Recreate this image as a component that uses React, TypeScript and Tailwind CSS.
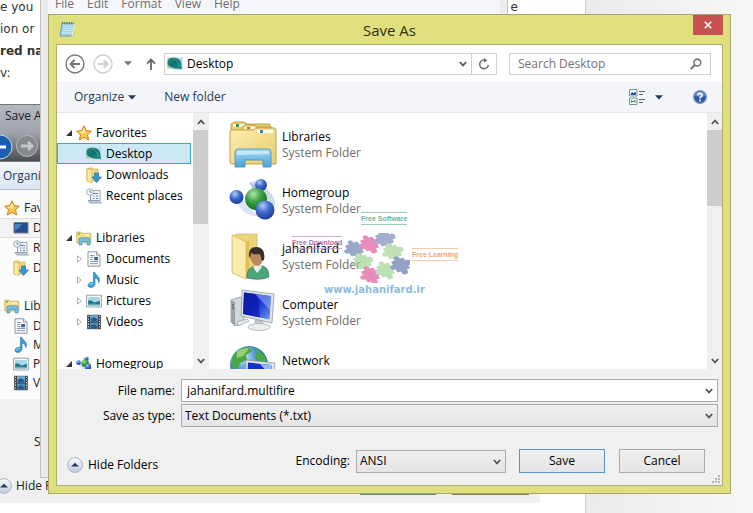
import type { ReactNode } from 'react';
import clsx from 'clsx';

type IconProps = { className?: string };

const StarIcon = ({ className }: IconProps) => (
  <svg viewBox="0 0 16 16" className={className}>
    <path
      d="M8 .8 10.2 5.6 15.4 6.2 11.5 9.8 12.6 15 8 12.4 3.4 15 4.5 9.8.6 6.2 5.8 5.6Z"
      fill="#fbc64b"
      stroke="#cf7d1e"
      strokeLinejoin="round"
    />
    <path d="M8 2.8 9.4 6.4 8 9 3 7 6.3 6.4Z" fill="#fdeca0" />
  </svg>
);

const DesktopIcon = ({ className }: IconProps) => (
  <svg viewBox="0 0 16 16" className={className}>
    <defs>
      <linearGradient id="desk" x1="0" y1="0" x2="1" y2="1">
        <stop offset="0" stopColor="#2f9a6c" />
        <stop offset=".45" stopColor="#0f6f78" />
        <stop offset="1" stopColor="#1d9080" />
      </linearGradient>
    </defs>
    <path d="M.5 1.5H15.5V14L.5 12.5Z" fill="#b4d6ea" />
    <path d="M.5 4Q2 1.8 6 1.6 12 1.8 14 6.5L15 13 8 12.6Q3 11.5.5 9Z" fill="url(#desk)" />
    <path d="M.5 8.5Q3 11.5 8 12.8L.5 12Z" fill="#a6cb7b" />
    <path d="M6 2.5Q11 4 12.5 11" stroke="#3fae93" strokeWidth=".8" fill="none" />
  </svg>
);

const DownloadsIcon = ({ className }: IconProps) => (
  <svg viewBox="0 0 16 16" className={className}>
    <path d="M1 1.5 6 .8V2H12V14H1Z" fill="#f3d878" stroke="#d2ad45" strokeWidth=".7" />
    <path d="M1 1.5 6 3V15.5L1 14Z" fill="#faeaa5" stroke="#d2ad45" strokeWidth=".7" />
    <path d="M8.5 6H12.5V10H15.5L10.5 15.5 6 10H8.5Z" fill="#3795dc" stroke="#2473ae" strokeWidth=".7" />
  </svg>
);

const RecentIcon = ({ className }: IconProps) => (
  <svg viewBox="0 0 16 16" className={className}>
    <path d="M4.5 2.5H14V13H4.5Z" fill="#edf3f9" stroke="#7f92a5" strokeWidth=".8" />
    <path d="M2 12.5H12.5L15.5 15H4Z" fill="#c5d0db" stroke="#75889b" strokeWidth=".7" />
    <path d="M7 5.5H12M7 8H8.5M10 8H12M7 10.5H8.5M10 10.5H12" stroke="#6a87a5" />
    <circle cx="4" cy="4" r="3.3" fill="#f4f7fa" stroke="#8799aa" strokeWidth=".8" />
    <path d="M4 2V4.2H5.8" stroke="#586b7e" strokeWidth=".8" fill="none" />
  </svg>
);

const LibrariesSmallIcon = ({ className }: IconProps) => (
  <svg viewBox="0 0 16 16" className={className}>
    <path d="M.8 2H5L6 3.3H14.8V13H.8Z" fill="#f4df8b" stroke="#bfa24a" strokeWidth=".7" />
    <path d="M2 3.8H4" stroke="#48a04a" strokeWidth="1.2" />
    <path d="M8 4.8H13" stroke="#fff8d4" strokeWidth="1.2" />
    <path d="M3 15V9.2Q3 7.8 4.5 7.8H12.5Q14 7.8 14 9.2V15H11.2V11.5H5.8V15Z" fill="#72c0e8" stroke="#4092bf" strokeWidth=".7" />
  </svg>
);

const DocumentIcon = ({ className }: IconProps) => (
  <svg viewBox="0 0 16 16" className={className}>
    <path d="M2 .8H10.5L14 4.2V15.2H2Z" fill="#fbfcfd" stroke="#7f8c99" strokeWidth=".9" />
    <path d="M10.5.8V4.2H14" fill="#dde5ed" stroke="#7f8c99" strokeWidth=".8" />
    <path d="M4 4.5H8.5M4 6.5H7M4 8.5H7M4 10.5H12M4 12.7H12" stroke="#7590ae" strokeWidth=".9" />
    <path d="M8.2 6H12V9.3H8.2Z" fill="#315f98" />
  </svg>
);

const MusicIcon = ({ className }: IconProps) => (
  <svg viewBox="0 0 16 16" className={className}>
    <path
      d="M7.5.5H9C9.2 3.4 13.8 4 13.6 8.2 13.5 9.2 13 10 12.4 10.6 12.9 7.6 10.6 6.2 9 6V12.2C8.8 14.4 6.5 15.6 4.3 15.4 2.2 15.1 1.4 13.5 2.4 12 3.4 10.5 5.8 9.8 7.5 10.5Z"
      fill="#37a3dd"
      stroke="#2271a5"
      strokeWidth=".6"
    />
    <path d="M3.3 13Q4.5 11.3 6.8 11.5" stroke="#a6dcf7" fill="none" />
  </svg>
);

const PictureIcon = ({ className }: IconProps) => (
  <svg viewBox="0 0 16 16" className={className}>
    <path d="M.6 2.2H15.4V14H.6Z" fill="#f9fbfc" stroke="#7c8b98" strokeWidth=".8" />
    <path d="M2.2 4H13.8V12.3H2.2Z" fill="#a3d8ec" />
    <path d="M2.2 7.6Q5 7 7 8.8T13.8 7.6V12.3H2.2Z" fill="#216f7e" />
    <path d="M2.2 10.8Q8 9.8 13.8 11.2V12.3H2.2Z" fill="#5dafb9" />
  </svg>
);

const VideoIcon = ({ className }: IconProps) => (
  <svg viewBox="0 0 16 16" className={className}>
    <path d="M1.2.8H14.8V15.2H1.2Z" fill="#2c3742" />
    <path d="M4 1.2H12V7.5H4Z" fill="#70aed4" />
    <path d="M4 8.5H12V14.8H4Z" fill="#4e91bd" />
    <path d="M4 5 8 3 12 5.5 10 7.5H6ZM4 12 8 10 12 13 10 14.8H6Z" fill="#295b86" />
    <path d="M2.6 1.8V15M13.4 1.8V15" stroke="#dde8f0" strokeWidth="1.1" strokeDasharray="1.3 1.3" />
  </svg>
);

const HomegroupIcon = ({ className }: IconProps) => (
  <svg viewBox="0 0 48 48" className={className}>
    <defs>
      <radialGradient id="blueBall" cx=".38" cy=".28" r=".75">
        <stop offset="0" stopColor="#b4cdf6" />
        <stop offset=".45" stopColor="#426ed0" />
        <stop offset="1" stopColor="#173a9c" />
      </radialGradient>
      <radialGradient id="greenBall" cx=".38" cy=".28" r=".75">
        <stop offset="0" stopColor="#b2e3a6" />
        <stop offset=".45" stopColor="#3ea548" />
        <stop offset="1" stopColor="#126b25" />
      </radialGradient>
    </defs>
    <path d="M20 6Q28 2 33 7 43 15 46 24 47 31 39 39 43 23 31 14Z" fill="#cfdced" />
    <path d="M9 20Q7 34 24 39L38 40Q20 36 15 24Z" fill="#d9e3f1" />
    <path d="M20 5Q25 11 22 17L33 12Z" fill="#a9c1e4" />
    <circle cx="32" cy="8" r="6" fill="url(#blueBall)" />
    <circle cx="7.5" cy="20" r="7" fill="url(#blueBall)" />
    <circle cx="27" cy="22" r="11" fill="url(#greenBall)" />
    <circle cx="36" cy="33" r="9.5" fill="url(#blueBall)" />
  </svg>
);

const LibrariesLargeIcon = ({ className }: IconProps) => (
  <svg viewBox="0 0 48 48" className={className}>
    <defs>
      <linearGradient id="folder" x1="0" y1="0" x2="1" y2="1">
        <stop offset="0" stopColor="#fbeeb0" />
        <stop offset="1" stopColor="#e9cd6c" />
      </linearGradient>
      <linearGradient id="stand" x1="0" y1="0" x2="0" y2="1">
        <stop offset="0" stopColor="#a4dcf5" />
        <stop offset="1" stopColor="#4ba4d6" />
      </linearGradient>
    </defs>
    <path d="M2 12V3L5 1H15L18 3H41V14Z" fill="#e8cf74" stroke="#af9037" strokeWidth=".8" />
    <path d="M4 3H16V6H4Z" fill="#fdf9e2" />
    <path d="M7 3H10V6H7Z" fill="#459847" />
    <path d="M13 14V6L16 4H25L28 6H43V16Z" fill="#efd986" stroke="#af9037" strokeWidth=".8" />
    <path d="M16 6H26V8H16Z" fill="#fdf9e2" />
    <path d="M18 6H21V8H18Z" fill="#bf673c" />
    <path d="M1 11Q1 9 3 9H25L27 7H45Q47 7 47 9V43H3Q1 43 1 41Z" fill="url(#folder)" stroke="#bd9a3c" strokeWidth=".9" />
    <path d="M28 9H44V12H28Z" fill="#fffdf0" />
    <path d="M31 9H34V12H31Z" fill="#4279ae" />
    <path d="M6 46V31Q6 28 9 28H39Q42 28 42 31V46H34V39H16V46Z" fill="url(#stand)" stroke="#5093bd" strokeWidth=".9" />
    <path d="M8 34V31Q8 30 10 30H38Q40 30 40 31V33Z" fill="#d4f0fb" opacity=".75" />
  </svg>
);

const UserFolderIcon = ({ className }: IconProps) => (
  <svg viewBox="0 0 48 48" className={className}>
    <path d="M5 2 9 1H28V42H8Z" fill="#ecd27b" stroke="#d4b65b" strokeWidth=".7" />
    <path d="M3 2 17 9V46L3 40Z" fill="#fbecad" stroke="#d2b557" strokeWidth=".8" />
    <path d="M17 9 20 7V43L17 46Z" fill="#dfbd57" />
    <path d="M18 43Q18 34 27 33L34 33Q40 35 40 44 31 48 18 45Z" fill="#4fa57a" stroke="#35775a" strokeWidth=".7" />
    <path d="M24 34 28 40 33 34 30 30Z" fill="#e5f0e4" />
    <path d="M21 24Q20 17 28 17T34 25Q33 33 28 33 22 31 21 24Z" fill="#bd8761" />
    <path d="M20 23Q19 14 28 14 37 15 35 27L33 28 31 21Q25 22 22 20L21 25Z" fill="#3c2d25" />
  </svg>
);

const ComputerIcon = ({ className }: IconProps) => (
  <svg viewBox="0 0 48 48" className={className}>
    <defs>
      <linearGradient id="screen" x1="0" y1="0" x2="1" y2="1">
        <stop offset="0" stopColor="#0b1d9d" />
        <stop offset=".5" stopColor="#1734d3" />
        <stop offset="1" stopColor="#6f9cf2" />
      </linearGradient>
    </defs>
    <path d="M2 11 11 8 15 10V34L6 37 2 33Z" fill="#d2d7dc" stroke="#8a9299" strokeWidth=".7" />
    <path d="M2 11 6 13V37L2 33Z" fill="#9ba3aa" />
    <path d="M3 16H5M3 19H5" stroke="#465057" />
    <path d="M8 33 18 30 20 32 9 37Z" fill="#e8ebed" stroke="#9ba3a9" strokeWidth=".7" />
    <path d="M25 31H34L35 38H27Z" fill="#bfc6cb" />
    <ellipse cx="30" cy="38" rx="11" ry="3.5" fill="#eceff1" stroke="#a6adb3" strokeWidth=".8" />
    <path d="M13 1 45 5 43 34 12 27Z" fill="#e0e4e8" stroke="#929ba3" strokeWidth=".8" />
    <path d="M15 3.5 42 7 40.5 30.5 14 25Z" fill="url(#screen)" />
    <path d="M15 3.5 29 5.3 31 28.5 14 25Z" fill="#0d1aab" opacity=".7" />
    <path d="M26 5 42 7 41 21Z" fill="#a9c5fa" opacity=".5" />
  </svg>
);

const NetworkIcon = ({ className }: IconProps) => (
  <svg viewBox="0 0 48 48" className={className}>
    <defs>
      <radialGradient id="globe" cx=".35" cy=".3" r=".75">
        <stop offset="0" stopColor="#c5e9fb" />
        <stop offset=".5" stopColor="#418fce" />
        <stop offset="1" stopColor="#154f94" />
      </radialGradient>
    </defs>
    <circle cx="20" cy="20" r="19" fill="url(#globe)" />
    <path d="M5 9Q11 2 19 2L23 6 17 10 18 15 11 18 9 24 2 21Q2 13 5 9ZM25 3Q35 7 38 16L31 18 26 13 28 8Z" fill="#4ca747" />
    <path d="M8 6Q16 2 20 4L14 11 8 13Z" fill="#b6df8b" opacity=".7" />
    <path d="M17 15 46 18 44 44 16 39Z" fill="#e0e5ea" stroke="#8c99a5" strokeWidth=".8" />
    <path d="M19 17.5 43 20 41.5 41 18 37Z" fill="#1631ca" />
    <path d="M31 19 43 20 42 31Z" fill="#9cbaf5" />
  </svg>
);

const NotepadIcon = ({ className }: IconProps) => (
  <svg viewBox="0 0 16 16" className={className}>
    <path d="M3 2.2H15L13.6 15H1Z" fill="#9ed0e4" stroke="#5a93ad" strokeWidth=".8" />
    <path d="M3.8 5H13.6M3.5 7.3H13.3M3.2 9.6H13M3 12H12.7" stroke="#d5eef7" strokeWidth=".9" />
    <path d="M13 15 15.4 3" stroke="#fbfdfd" />
    <path d="M3.5 1V3.2M5.8 1V3.2M8.1 1V3.2M10.4 1V3.2M12.7 1V3.2" stroke="#5b6870" strokeWidth=".9" />
  </svg>
);

const Chevron = ({ className, up }: IconProps & { up?: boolean }) => (
  <svg viewBox="0 0 8 6" className={clsx('h-[6px] w-2 shrink-0', className)}>
    <path d={up ? 'M.8 5 4 1.6 7.2 5' : 'M.8 1 4 4.4 7.2 1'} fill="none" stroke="#555" strokeWidth="1.8" />
  </svg>
);

const Caret = ({ className }: IconProps) => (
  <svg viewBox="0 0 8 5" className={clsx('h-[5px] w-2 shrink-0', className)}>
    <path d="M0 .3H8L4 4.6Z" fill="currentColor" />
  </svg>
);

const CollapseIcon = () => (
  <svg viewBox="0 0 16 16" className="size-4 shrink-0">
    <defs>
      <linearGradient id="collapse" x1="0" y1="0" x2="0" y2="1">
        <stop offset="0" stopColor="#fbfcfd" />
        <stop offset="1" stopColor="#bccbdc" />
      </linearGradient>
    </defs>
    <circle cx="8" cy="8" r="7.4" fill="url(#collapse)" stroke="#a9b4c0" />
    <path d="M4 9.6 8 5.8 12 9.6Z" fill="#273a5e" />
  </svg>
);

const ArrowCircle = ({ right, color }: { right?: boolean; color: string }) => (
  <svg viewBox="0 0 20 20" className="size-5">
    <circle cx="10" cy="10" r="9" fill="none" stroke={color} strokeWidth="1.4" />
    <path
      d={right ? 'M5 10H14M10.5 6 14.5 10 10.5 14' : 'M15 10H6M9.5 6 5.5 10 9.5 14'}
      fill="none"
      stroke={color}
      strokeWidth="2"
    />
  </svg>
);

const small = 'size-4 shrink-0';

type TreeNode = { label: string; icon: ReactNode };
type TreeGroup = TreeNode & { items: TreeNode[]; expandable?: boolean };

const tree: TreeGroup[] = [
  {
    label: 'Favorites',
    icon: <StarIcon className={small} />,
    items: [
      { label: 'Desktop', icon: <DesktopIcon className={small} /> },
      { label: 'Downloads', icon: <DownloadsIcon className={small} /> },
      { label: 'Recent places', icon: <RecentIcon className={small} /> },
    ],
  },
  {
    label: 'Libraries',
    icon: <LibrariesSmallIcon className={small} />,
    expandable: true,
    items: [
      { label: 'Documents', icon: <DocumentIcon className={small} /> },
      { label: 'Music', icon: <MusicIcon className={small} /> },
      { label: 'Pictures', icon: <PictureIcon className={small} /> },
      { label: 'Videos', icon: <VideoIcon className={small} /> },
    ],
  },
  { label: 'Homegroup', icon: <HomegroupIcon className={small} />, items: [] },
];

const large = 'size-12 shrink-0';

const files = [
  { name: 'Libraries', icon: <LibrariesLargeIcon className={large} /> },
  { name: 'Homegroup', icon: <HomegroupIcon className={large} /> },
  { name: 'jahanifard', icon: <UserFolderIcon className={large} /> },
  { name: 'Computer', icon: <ComputerIcon className={large} /> },
  { name: 'Network', icon: <NetworkIcon className={large} /> },
];

const Scrollbar = ({ thumb }: { thumb: string }) => (
  <div className="flex w-[15px] shrink-0 flex-col items-center bg-[#f0f0f0]">
    <div className="flex h-[17px] items-center">
      <Chevron up />
    </div>
    <div className={clsx('w-full bg-[#cdcdcd]', thumb)} />
    <div className="mt-auto flex h-[17px] items-center">
      <Chevron />
    </div>
  </div>
);

const Sidebar = () => (
  <nav className="flex min-w-0 flex-1 flex-col gap-[21px] overflow-hidden pt-[9px]">
    {tree.map(group => (
      <div key={group.label}>
        <button className="flex h-[21px] items-center gap-1 pl-[9px]">
          <svg viewBox="0 0 6 6" className="size-[6px]">
            <path d="M6 0V6H0Z" fill="#333" />
          </svg>
          {group.icon}
          {group.label}
        </button>
        {group.items.map(item => (
          <button
            key={item.label}
            className={clsx(
              'flex h-[21px] w-[134px] items-center gap-1 border pl-[19px] whitespace-nowrap',
              item.label === 'Desktop' ? 'border-[#4aa0bd] bg-[#cbe8f6]' : 'border-transparent',
            )}
          >
            <svg viewBox="0 0 5 8" className="h-2 w-[5px]">
              {group.expandable && <path d="M.5.8 4.3 4 .5 7.2Z" fill="#fff" stroke="#999" strokeWidth=".8" />}
            </svg>
            {item.icon}
            {item.label}
          </button>
        ))}
      </div>
    ))}
  </nav>
);

// column, row, colour of each jigsaw piece; the middle one is missing
const puzzle: [number, number, string][] = [
  [0, 0, '#6e83b3'],
  [1, 0, '#e05ba0'],
  [2, 0, '#7a8cba'],
  [0, 1, '#a5d39a'],
  [2, 1, '#a5d39a'],
  [0, 2, '#e05ba0'],
  [1, 2, '#a5d39a'],
  [2, 2, '#657cad'],
];

const tag = "absolute border-y font-['Liberation_Sans'] text-[7px] leading-[11px] font-bold whitespace-nowrap";

const Watermark = () => (
  <div className="pointer-events-none absolute top-[99px] left-[83px] h-[92px] w-[170px] opacity-70">
    <svg viewBox="0 0 66 50" className="absolute top-[21px] left-[52px] h-[50px] w-[66px]">
      <g transform="matrix(15 -5 8 13 -1 12)">
        {puzzle.map(([col, row, color]) => (
          <g key={`${col}-${row}`} fill={color}>
            <rect x={col + 0.08} y={row + 0.08} width=".84" height=".84" rx=".08" />
            <circle cx={col + 1} cy={row + 0.5} r=".2" />
            <circle cx={col + 0.5} cy={row + 1} r=".2" />
            <circle cx={col + 0.5} cy={row} r=".16" />
            <circle cx={col} cy={row + 0.5} r=".16" />
          </g>
        ))}
      </g>
    </svg>
    <span className={clsx(tag, 'top-0 left-[69px] border-[#75b793] text-[#358f62]')}>Free Software</span>
    <span className={clsx(tag, 'top-6 left-0 border-[#bb8abb] text-[#84368b]')}>Free Download</span>
    <span className={clsx(tag, 'top-9 left-[120px] border-[#f2b491] text-[#e97b43]')}>Free Learning</span>
    <span className="absolute top-[70px] left-[32px] font-['DejaVu_Sans'] text-[10px] leading-4 font-bold whitespace-nowrap text-[#5b9fd8]">
      www.jahanifard.ir
    </span>
  </div>
);

const SaveDialog = () => (
  <section className="relative mt-[14px] mr-[22px] ml-12 border border-[#a8a76d] bg-[#e0df7e] px-[7px] pb-[7px] text-xs text-black">
    <header className="relative flex h-[29px] items-center justify-center">
      <NotepadIcon className="absolute top-[6px] left-[3px] size-4" />
      <h1 className="text-[15px] leading-5 text-[#30300f]">Save As</h1>
      <button aria-label="Close" className="absolute top-0 right-0 flex h-5 w-[30px] items-center justify-center bg-[#c75050]">
        <svg viewBox="0 0 8 8" className="size-2">
          <path d="M.8.8 7.2 7.2M7.2.8.8 7.2" stroke="#fff" strokeWidth="1.6" />
        </svg>
      </button>
    </header>

    <div className="border border-[#b0ae70] bg-[#f0f0f0]">
      {/* Address bar */}
      <div className="flex h-[37px] items-center bg-white pr-[11px] pl-2">
        <button aria-label="Back"><ArrowCircle color="#7a7a7a" /></button>
        <button aria-label="Forward" className="ml-2"><ArrowCircle right color="#cfcfcf" /></button>
        <button aria-label="Recent locations" className="ml-[11px] text-[#777]"><Caret /></button>
        <button aria-label="Up" className="ml-[14px]">
          <svg viewBox="0 0 10 12" className="h-3 w-[10px]">
            <path d="M5 12V2M1 5.6 5 1.6 9 5.6" fill="none" stroke="#666" strokeWidth="1.8" />
          </svg>
        </button>
        <div className="ml-2 flex h-[22px] flex-1 items-center border border-[#d0d0d0]">
          <DesktopIcon className="ml-[2px] size-4" />
          <input aria-label="Address" defaultValue="Desktop" className="ml-1 min-w-0 flex-1 outline-none" />
          <button aria-label="Previous locations" className="mr-1"><Chevron /></button>
          <button aria-label="Refresh" className="flex h-full w-[25px] items-center justify-center border-l border-[#d0d0d0]">
            <svg viewBox="0 0 12 12" className="size-3">
              <path d="M7 2H6A4.3 4.3 0 1 0 10.3 6.8" fill="none" stroke="#707070" strokeWidth="1.6" />
              <path d="M6 0 9.5 2.2 6 4.8Z" fill="#707070" />
            </svg>
          </button>
        </div>
        <div className="ml-3 flex h-[22px] w-[202px] items-center border border-[#d0d0d0] pr-2 pl-2">
          <input aria-label="Search" placeholder="Search Desktop" className="min-w-0 flex-1 outline-none placeholder:text-[#747474]" />
          <svg viewBox="0 0 12 12" className="size-3">
            <circle cx="7.3" cy="4.5" r="3.4" fill="none" stroke="#777" strokeWidth="1.6" />
            <path d="M4.8 7 .8 11" stroke="#777" strokeWidth="2.2" />
          </svg>
        </div>
      </div>

      {/* Command bar */}
      <div className="flex h-[31px] items-center border-b border-[#e4e6ea] bg-[#f4f5f8] pr-[15px] pl-[17px] text-[#1e395b]">
        <button className="flex items-center gap-1">Organize <Caret /></button>
        <button className="ml-7">New folder</button>
        <button aria-label="Change view" className="ml-auto flex items-center gap-[10px]">
          <svg viewBox="0 0 16 16" className="size-4">
            <path d="M.5.5H8V7H.5ZM.5 9H8V15.5H.5Z" fill="#f7fbfd" stroke="#6a9a9e" />
            <path d="M2 5.5 3 3.5 4.5 4.5 6.5 3.5V5.5Z" fill="#24539b" stroke="#24539b" />
            <path d="M2.5 13.5V11.5L4 13 6 11.5V13.5" stroke="#348044" fill="none" />
            <path d="M10 2.5H16M10 5.5H14M10 10.5H16M10 13.5H14" stroke="#52677b" />
          </svg>
          <Caret />
        </button>
        <button aria-label="Help" className="ml-[30px]">
          <svg viewBox="0 0 14 14" className="size-[14px]">
            <circle cx="7" cy="7" r="6.3" fill="#2d58b5" stroke="#7e94b9" strokeWidth="1.2" />
            <path d="M2 5.5A5.2 5.2 0 0 1 12 5.5Q7 8 2 5.5Z" fill="#86a6e2" opacity=".7" />
            <path d="M5 5.3Q5 3.4 7 3.4T9 5.2Q9 6.3 7.8 6.9 7 7.3 7 8.4" fill="none" stroke="#fff" strokeWidth="1.6" />
            <circle cx="7" cy="10.4" r="1" fill="#fff" />
          </svg>
        </button>
      </div>

      <div className="flex h-64 overflow-hidden bg-white">
        <div className="flex w-[152px] shrink-0 border-r border-[#f0f0f0]">
          <Sidebar />
          <Scrollbar thumb="h-[94px]" />
        </div>
        <div className="relative min-w-0 flex-1 pt-1 pl-5">
          {files.map(file => (
            <button key={file.name} className="flex h-14 items-center gap-[5px] text-left leading-4">
              {file.icon}
              <span>
                {file.name}
                <span className="block text-[#6d6d6d]">System Folder</span>
              </span>
            </button>
          ))}
          <Watermark />
        </div>
        <Scrollbar thumb="h-[76px]" />
      </div>

      <form className="pt-[10px] pb-3" onSubmit={e => e.preventDefault()}>
        <div className="grid grid-cols-[118px_1fr] items-center gap-x-[6px] gap-y-[2px] pr-1">
          <label htmlFor="fileName" className="text-right">File name:</label>
          <div className="flex h-[23px] items-center border border-[#ababab] bg-white pr-1 pl-[5px]">
            <input id="fileName" defaultValue="jahanifard.multifire" className="min-w-0 flex-1 outline-none" />
            <button type="button" aria-label="File name history"><Chevron /></button>
          </div>
          <label htmlFor="fileType" className="text-right">Save as type:</label>
          <div className="relative">
            <select id="fileType" className="block h-[23px] w-full appearance-none border border-[#ababab] bg-linear-to-b from-[#f0f0f0] to-[#e5e5e5] pl-[3px]">
              <option>Text Documents (*.txt)</option>
            </select>
            <Chevron className="pointer-events-none absolute top-[9px] right-[5px]" />
          </div>
        </div>

        <div className="mt-[22px] flex h-6 items-center pr-[17px] pl-[10px]">
          <button type="button" className="flex items-center gap-[5px] self-end">
            <CollapseIcon />
            Hide Folders
          </button>
          <label htmlFor="encoding" className="ml-auto">Encoding:</label>
          <div className="relative ml-[6px]">
            <select id="encoding" className="block h-[23px] w-[150px] appearance-none border border-[#ababab] bg-linear-to-b from-[#f0f0f0] to-[#e5e5e5] pl-[3px]">
              <option>ANSI</option>
            </select>
            <Chevron className="pointer-events-none absolute top-[9px] right-[5px]" />
          </div>
          <button type="submit" className="ml-[13px] h-6 w-[86px] border border-[#5a93c8] bg-linear-to-b from-[#f0f0f0] to-[#e5e5e5]">
            Save
          </button>
          <button type="button" className="ml-[14px] h-6 w-[86px] border border-[#acacac] bg-linear-to-b from-[#f0f0f0] to-[#e5e5e5]">
            Cancel
          </button>
        </div>
      </form>
      <svg viewBox="0 0 8 8" className="absolute right-[10px] bottom-[10px] size-2">
        <path d="M6 0H8V2H6ZM3 3H5V5H3ZM6 3H8V5H6ZM0 6H2V8H0ZM3 6H5V8H3ZM6 6H8V8H6Z" fill="#b8b8b8" />
      </svg>
    </div>
  </section>
);

// Older dialog that sits in the article behind the windows
const ArticleDialog = () => (
  <div className="absolute top-[104px] right-[213px] left-0 h-[399px] overflow-hidden bg-[#f0f0f0] text-xs text-[#222]">
    <div className="flex h-[58px] flex-col justify-between border-t border-b border-[#777] bg-linear-to-b from-[#b4bac2] via-[#a0a4aa] to-[#4b4f54]">
      <span className="pt-[3px] pl-[5px] leading-4">Save As</span>
      <svg viewBox="0 0 40 28" className="h-7 w-10">
        <circle cx="0" cy="14" r="12" fill="#1c5fae" stroke="#cfd8e2" />
        <path d="M6 14H-4M-1 9-6 14-1 19" stroke="#fff" strokeWidth="3" fill="none" />
        <circle cx="27" cy="13" r="10.5" fill="#85898d" stroke="#b5b9bd" />
        <path d="M21 13H32M28 9 32 13 28 17" stroke="#c4c6c8" strokeWidth="3" fill="none" />
      </svg>
    </div>
    <div className="h-7 border-b border-[#b9c4d3] bg-linear-to-b from-[#f3f7fc] to-[#dbe6f3] pl-[3px] leading-7 text-[#1e395b]">
      Organize
    </div>
    <div className="h-[209px] bg-[#fcfcfc] pt-2 whitespace-nowrap">
      <div className="flex h-5 items-center gap-1 pl-1"><StarIcon className={small} />Favorites</div>
      <div className="flex h-5 items-center gap-1 border-y border-[#ddd] bg-[#f2f2f2] pl-[13px]">
        <svg viewBox="0 0 16 16" className={small}>
          <path d="M1 2.5H15V13H1Z" fill="#234f91" stroke="#6d8099" />
          <path d="M2 4H9L5 9 2 10Z" fill="#4381c6" />
        </svg>
        Desktop
      </div>
      <div className="flex h-5 items-center gap-1 pl-[13px]"><RecentIcon className={small} />Recent Places</div>
      <div className="flex h-5 items-center gap-1 pl-[13px]"><DownloadsIcon className={small} />Downloads</div>
      <div className="mt-[18px] flex h-5 items-center gap-1 pl-1"><LibrariesSmallIcon className={small} />Libraries</div>
      <div className="flex h-[19px] items-center gap-1 pl-[13px]"><DocumentIcon className={small} />Documents</div>
      <div className="flex h-[19px] items-center gap-1 pl-[13px]"><MusicIcon className={small} />Music</div>
      <div className="flex h-[19px] items-center gap-1 pl-[13px]"><PictureIcon className={small} />Pictures</div>
      <div className="flex h-[19px] items-center gap-1 pl-[13px]"><VideoIcon className={small} />Videos</div>
    </div>
    <div className="pt-[35px] pl-[34px] leading-4">Save as type:</div>
    <div className="-ml-1 flex items-center gap-1 pt-7"><CollapseIcon />Hide Folders</div>
    <div className="flex gap-4 pl-[360px]">
      <div className="h-px w-[76px] bg-[#568c72]" />
      <div className="h-px w-[77px] bg-[#8a7f4e]" />
    </div>
  </div>
);

const NotepadWindow = () => (
  <div className="absolute top-0 right-[245px] left-10 h-[478px] border-x border-b border-[#c2c2c2] bg-[#ececec] px-[7px] pb-2">
    <div className="h-full bg-[#f5f6fa]">
      <div className="-mt-1 flex gap-[13px] pl-[7px] text-xs leading-4 text-[#6e6e6e]">
        <button>File</button>
        <button>Edit</button>
        <button>Format</button>
        <button>View</button>
        <button>Help</button>
      </div>
    </div>
  </div>
);

const App = () => (
  <main className="relative min-h-screen overflow-hidden bg-linear-to-r from-[#e9e9e9] from-75% to-[#f7f7f7] pb-5 font-['Open_Sans',sans-serif]">
    <div className="absolute inset-y-0 right-[167px] left-0 border-r border-[#ccc] bg-white">
      <div className="-mt-1 flex justify-between pr-[67px] font-['DejaVu_Sans'] text-xs leading-[22px] text-[#333]">
        <p className="whitespace-nowrap">
          e you
          <br />
          ion or
          <br />
          <b>red na</b>
          <br />
          v:
        </p>
        <p>e</p>
      </div>
    </div>
    <ArticleDialog />
    <NotepadWindow />
    <SaveDialog />
  </main>
);

export default App;
